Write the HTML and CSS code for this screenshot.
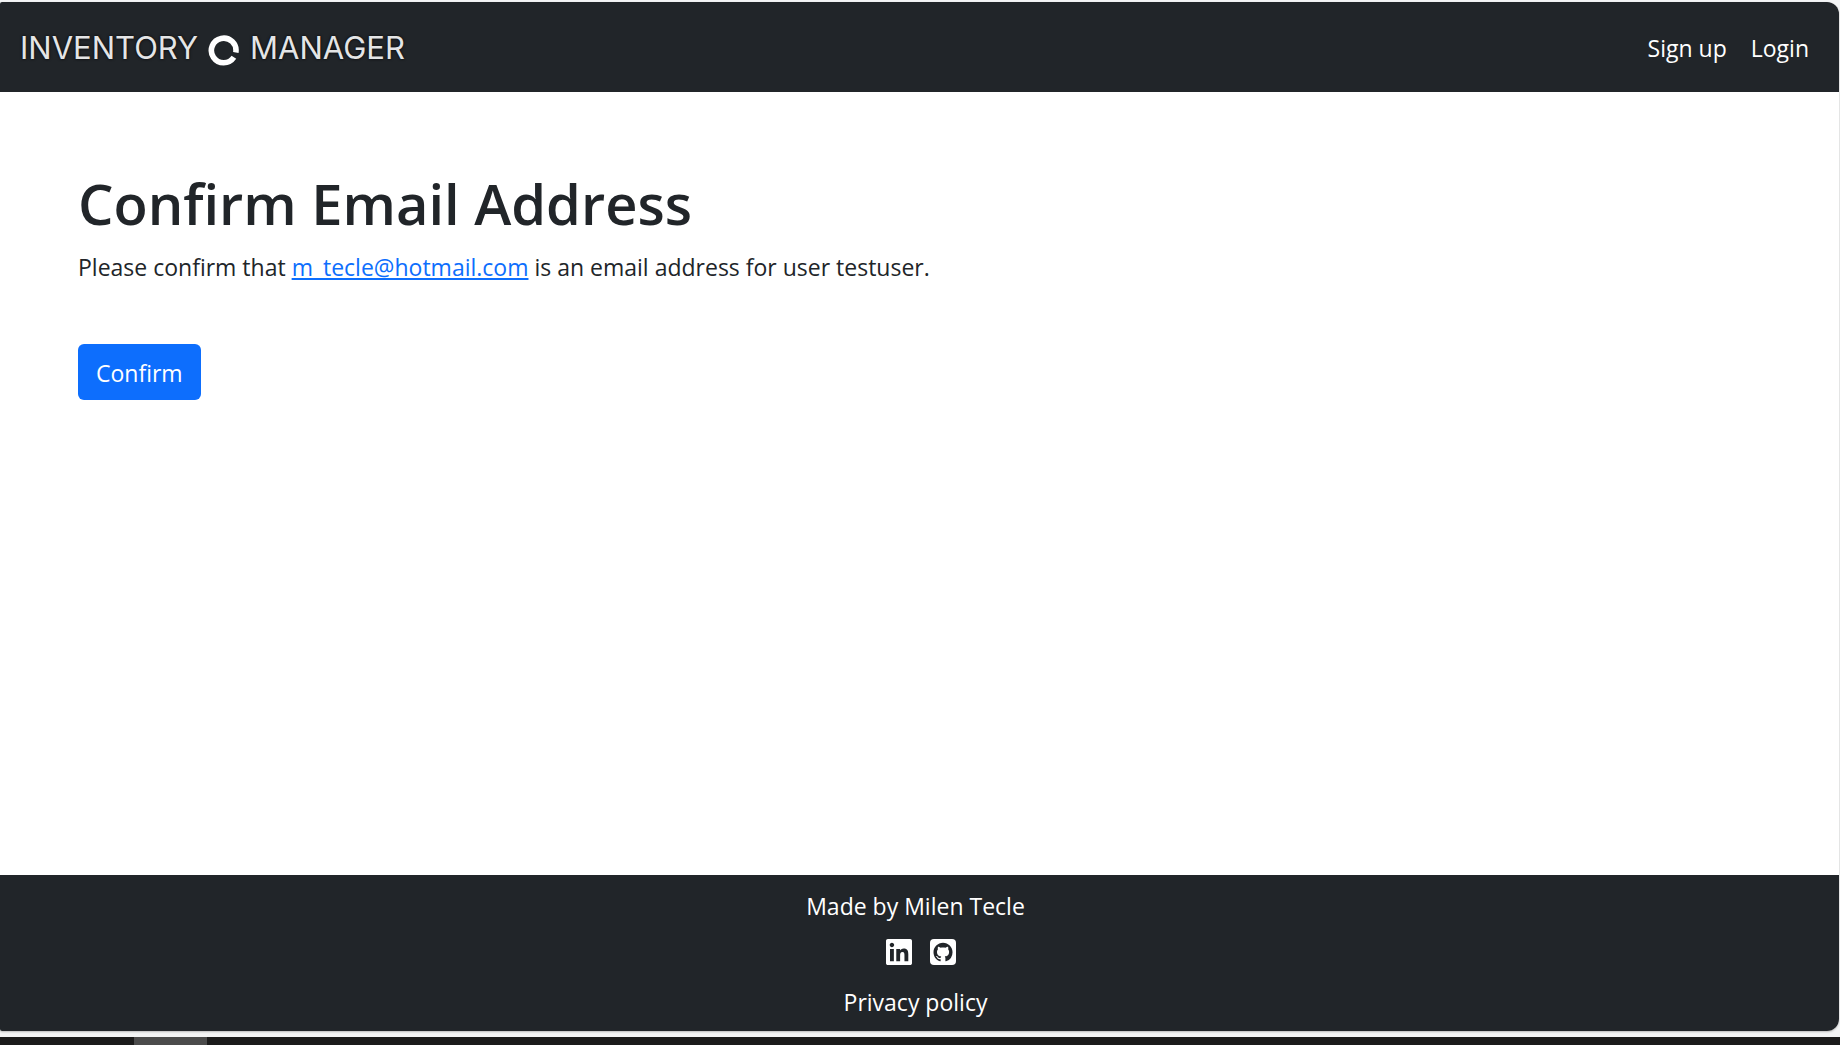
FILE: index.html
```html
<!DOCTYPE html>
<html lang="en">
<head>
<meta charset="utf-8">
<title>Confirm Email Address</title>
<link rel="stylesheet" href="styles.css">
</head>
<body>
<div class="window">
  <header class="navbar">
    <a class="brand" href="#" aria-label="Inventory Manager">
      <span>INVENTORY</span>
      <svg class="brand-ring" viewBox="0 0 32 32" aria-hidden="true">
        <path d="M27.800 18.600A12.300 12.300 0 1 0 25.900 23.300" fill="none" stroke="#fff" stroke-width="5.600"/>
      </svg>
      <span>MANAGER</span>
    </a>
    <nav class="nav-links">
      <a href="#">Sign up</a>
      <a href="#">Login</a>
    </nav>
  </header>
  <main class="content">
    <h1>Confirm Email Address</h1>
    <p>Please confirm that <a href="mailto:m_tecle@hotmail.com">m_tecle@hotmail.com</a> is an email address for user testuser.</p>
    <form>
      <button class="btn" type="submit">Confirm</button>
    </form>
  </main>
  <footer class="footer">
    <p>Made by Milen Tecle</p>
    <div class="social">
      <a href="#" aria-label="LinkedIn">
        <svg viewBox="0 32 448 448"><path fill="#fff" d="M416 32H31.900C14.300 32 0 46.500 0 64.300v383.400C0 465.500 14.300 480 31.900 480H416c17.600 0 32-14.500 32-32.300V64.300c0-17.800-14.400-32.300-32-32.300zM135.400 416H69V202.200h66.500V416zm-33.200-243c-21.300 0-38.500-17.300-38.500-38.500S80.900 96 102.200 96c21.200 0 38.500 17.300 38.500 38.500 0 21.300-17.200 38.500-38.500 38.500zm282.100 243h-66.400V312c0-24.800-.5-56.700-34.500-56.700-34.600 0-39.900 27-39.900 54.900V416h-66.400V202.200h63.700v29.200h.9c8.900-16.800 30.600-34.500 62.900-34.500 67.200 0 79.700 44.300 79.700 101.900V416z"/></svg>
      </a>
      <a href="#" aria-label="GitHub">
        <svg viewBox="0 0 26 26"><rect width="26" height="26" rx="4" fill="#fff"/><path transform="translate(3.500 3.800) scale(1.190)" fill="#212529" d="M8 0C3.580 0 0 3.580 0 8c0 3.540 2.290 6.530 5.470 7.590.4.070.550-.170.550-.380 0-.190-.010-.820-.010-1.490-2.010.370-2.530-.490-2.690-.940-.090-.230-.480-.940-.820-1.130-.280-.150-.680-.520-.010-.530.630-.010 1.080.580 1.230.820.720 1.210 1.870.870 2.330.660.070-.520.280-.870.510-1.070-1.780-.2-3.640-.890-3.640-3.950 0-.870.310-1.590.820-2.150-.080-.2-.360-1.020.080-2.120 0 0 .670-.210 2.200.820.640-.180 1.320-.270 2-.270.680 0 1.360.090 2 .270 1.530-1.040 2.200-.820 2.200-.820.440 1.100.160 1.920.080 2.120.510.560.820 1.270.820 2.150 0 3.070-1.870 3.750-3.650 3.950.290.250.540.730.540 1.480 0 1.070-.010 1.930-.010 2.200 0 .210.150.460.550.380A8.013 8.013 0 0 0 16 8c0-4.420-3.580-8-8-8z"/></svg>
      </a>
    </div>
    <p><a href="#">Privacy policy</a></p>
  </footer>
</div>
<div class="taskbar"><span class="taskbar-item"></span></div>
</body>
</html>
```
FILE: styles.css
```css
* {
  box-sizing: border-box;
}

body {
  margin: 0;
  min-height: 100vh;
  display: flex;
  flex-direction: column;
  background: #f3f4f5;
  color: #212529;
  font: 23px/36px "Open Sans", "Noto Sans", sans-serif;
}

h1,
p {
  margin: 0;
}

.window {
  flex: 1;
  display: flex;
  flex-direction: column;
  margin: 2px 1px 6px 0;
  border-radius: 2px 12px 12px 2px;
  overflow: hidden;
  background: #fff;
  box-shadow: 0 1px 2px #bbb;
}

.navbar {
  display: flex;
  align-items: center;
  justify-content: space-between;
  min-height: 90px;
  padding: 2px 30px 0 20px;
  background: #212529;
}

.navbar a,
.footer a {
  color: #fff;
  text-decoration: none;
}

.brand {
  display: flex;
  align-items: center;
  gap: 10px;
  font: 31px/36px Inter, sans-serif;
  text-shadow: 0 0 3px #000;
}

.navbar .brand {
  color: #e4e5e6;
}

.brand-ring {
  width: 32px;
  height: 32px;
  margin-top: 4px;
}

.nav-links {
  display: flex;
  gap: 24px;
}

.content {
  flex: 1;
  padding: 75px 78px;
}

h1 {
  margin-bottom: 10px;
  font-size: 56px;
  font-weight: 600;
  line-height: 72px;
}

.content a {
  color: #0d6efd;
}

.btn {
  margin-top: 59px;
  padding: 11px 18px 9px;
  border: 0;
  border-radius: 6px;
  background: #0d6efd;
  color: #fff;
  font: inherit;
}

.footer {
  display: flex;
  flex-direction: column;
  align-items: center;
  padding: 13px 8px 11px 0;
  background: #212529;
  color: #fff;
}

.social {
  display: flex;
  gap: 18px;
  padding: 15px 0 19px 10px;
}

.social svg {
  display: block;
  width: 26px;
  height: 26px;
}

.taskbar {
  height: 8px;
  padding-left: 134px;
  background: #1b1b1b;
}

.taskbar-item {
  display: block;
  width: 73px;
  height: 100%;
  background: #4b4b4b;
}
```
